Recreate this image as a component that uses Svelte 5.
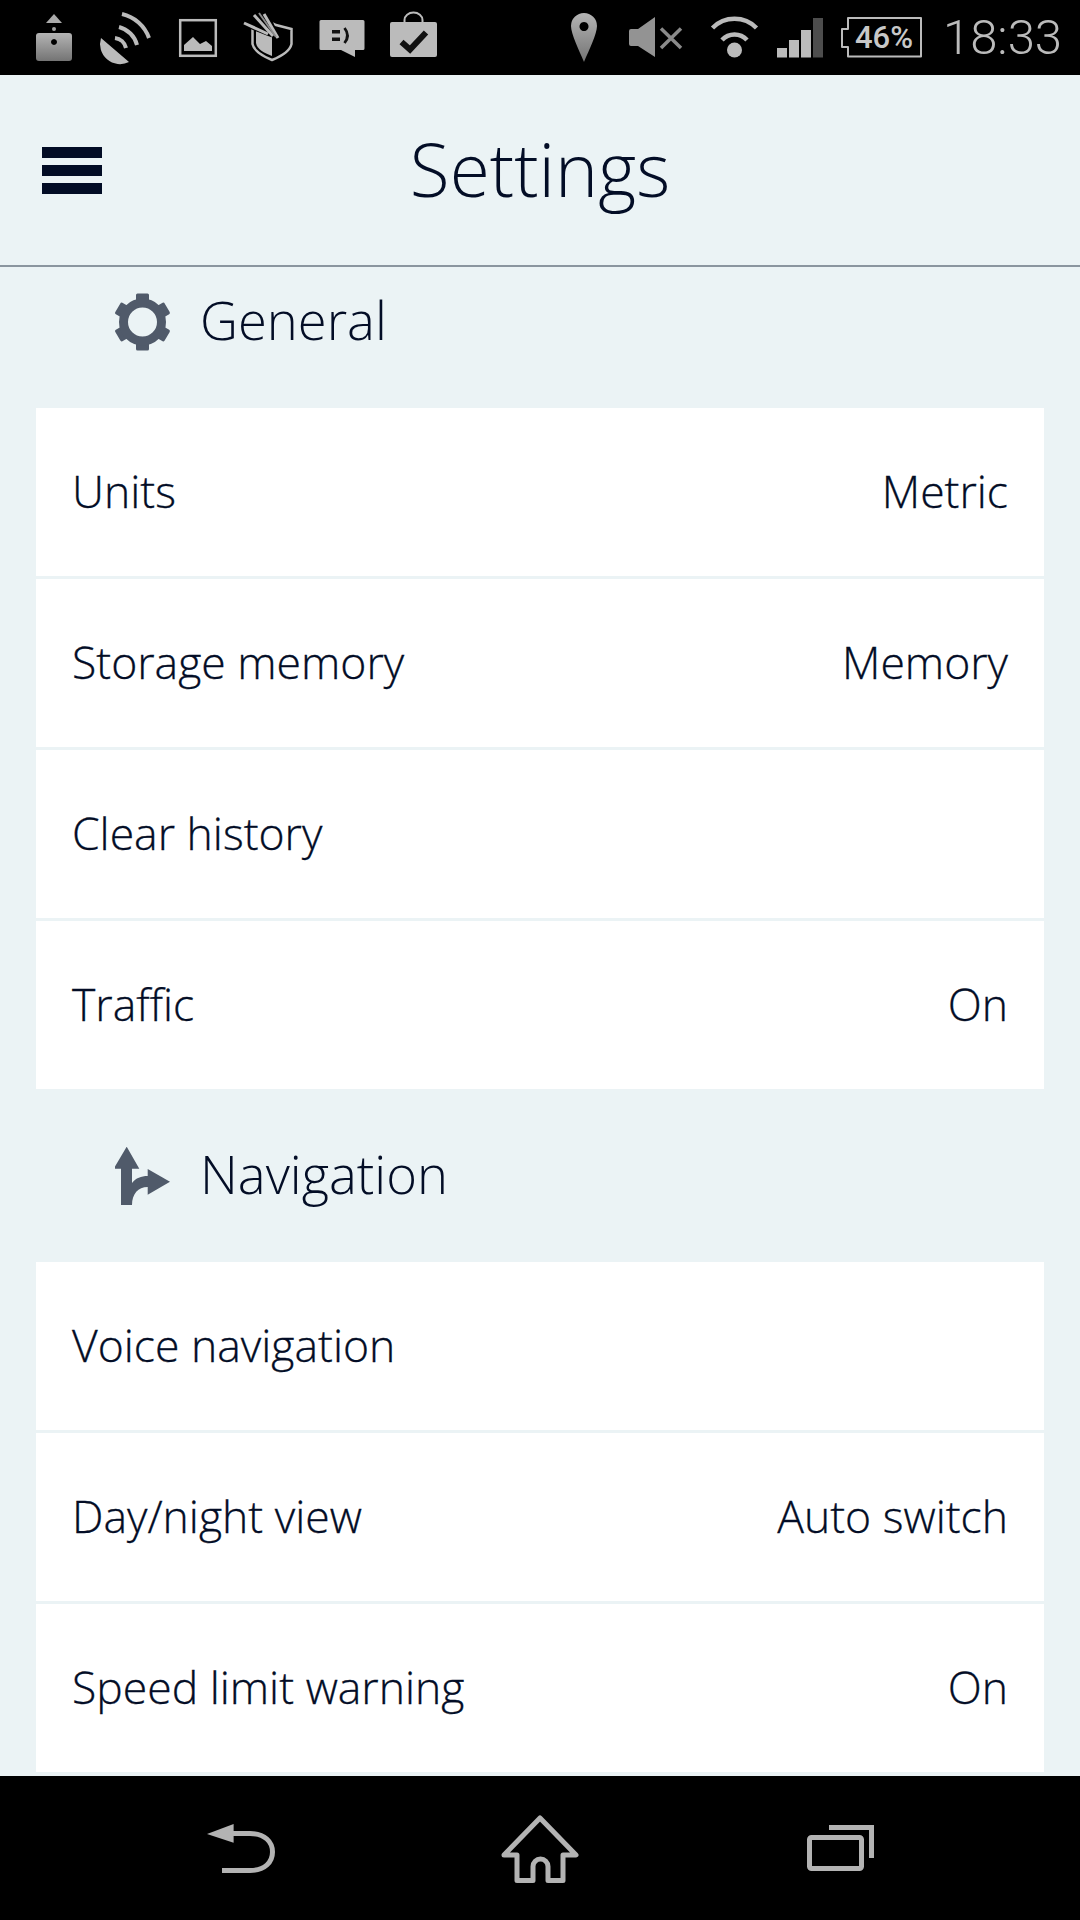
<script>
  const sections = [
    {
      title: "General",
      icon: "gear",
      rows: [
        { label: "Units", value: "Metric" },
        { label: "Storage memory", value: "Memory" },
        { label: "Clear history", value: "" },
        { label: "Traffic", value: "On" },
      ],
    },
    {
      title: "Navigation",
      icon: "fork",
      rows: [
        { label: "Voice navigation", value: "" },
        { label: "Day/night view", value: "Auto switch" },
        { label: "Speed limit warning", value: "On" },
      ],
    },
  ];

  const teeth = [0, 60, 120, 180, 240, 300];
</script>

<div class="screen">
  <!-- status bar icons are drawn in screen coordinates, hence the viewBoxes -->
  <div class="statusbar">
    <div class="group">
      <svg width="72" height="75" viewBox="18 0 72 75">
        <defs>
          <linearGradient id="dim" x1="0" y1="0" x2="0" y2="1">
            <stop offset="0" stop-color="#b4b4b4" />
            <stop offset="1" stop-color="#747474" />
          </linearGradient>
        </defs>
        <path d="M46 23 L54 14 L62 23Z" fill="#ababab" />
        <circle cx="54" cy="29" r="2" fill="#a0a0a0" />
        <path fill="url(#dim)" fill-rule="evenodd" d="M39 33H69a3 3 0 0 1 3 3V58a3 3 0 0 1-3 3H39a3 3 0 0 1-3-3V36a3 3 0 0 1 3-3ZM54 39a3 3 0 1 0 .01 0Z" />
      </svg>
      <svg width="72" height="75" viewBox="90 0 72 75">
        <path d="M101 38 L129 62 A20 20 0 0 1 101 38Z" fill="#bbb" />
        <g fill="none" stroke="#bbb" stroke-width="4">
          <path d="M122 14 A37.5 37.5 0 0 1 149 38" />
          <path d="M119 27 A25 25 0 0 1 137 45" />
          <path d="M115 38 A13 13 0 0 1 126 48" />
        </g>
      </svg>
      <svg width="72" height="75" viewBox="162 0 72 75">
        <rect x="180.2" y="20.2" width="35.6" height="35.6" fill="none" stroke="#bbb" stroke-width="2.5" />
        <path d="M184 51V45L193 37L200 44L206 41L212 46V51Z" fill="#bbb" />
      </svg>
      <svg width="72" height="75" viewBox="234 0 72 75">
        <path d="M252.500 28 L272 23 L276 25 L291.500 29 V44 C290 51 282 56 272 60 C262 56 254 51 252.500 44Z" fill="none" stroke="#bbb" stroke-width="2.500" />
        <path d="M256 30 H272 V56 C264 53 257 49 256 43Z" fill="#bbb" />
        <path d="M243 26 L268 36 L280 40 L270 14 L254 10Z" fill="#000" />
        <path d="M254 15 L273 36" stroke="#bbb" stroke-width="3" />
        <path d="M264 14 L278 38" stroke="#bbb" stroke-width="3" />
        <path d="M244 23 L268 34" stroke="#bbb" stroke-width="3" />
        <path d="M259 13 L276 37" stroke="#8c8c8c" stroke-width="2" />
      </svg>
      <svg width="72" height="75" viewBox="306 0 72 75">
        <path d="M321 20H363a1.5 1.5 0 0 1 1.500 1.500V48.500a1.500 1.500 0 0 1-1.500 1.500H355V57L341 50H321a1.500 1.500 0 0 1-1.500-1.500V21.500a1.500 1.500 0 0 1 1.500-1.500Z" fill="#bbb" />
        <rect x="332" y="30" width="8" height="3.500" fill="#111" />
        <rect x="332" y="37.500" width="8" height="3.500" fill="#111" />
        <path d="M344.500 28 Q350.500 35.500 344.500 43" fill="none" stroke="#111" stroke-width="2.800" />
      </svg>
      <svg width="72" height="75" viewBox="378 0 72 75">
        <path d="M404.500 24V20A9 7.500 0 0 1 422.500 20V24" fill="none" stroke="#bbb" stroke-width="2" />
        <rect x="390" y="22" width="47" height="35" rx="2" fill="#bbb" />
        <path d="M401.500 42 L410 49.500 L426 32.500" fill="none" stroke="#111" stroke-width="6" />
      </svg>
    </div>
    <div class="group">
      <svg width="52" height="75" viewBox="560 0 52 75">
        <path fill="url(#dim)" fill-rule="evenodd" d="M584 13A13 13 0 0 1 597 26C597 34 589 50 584 62C579 50 571 34 571 26A13 13 0 0 1 584 13ZM584 22a4.500 4.500 0 1 0 .01 0Z" />
      </svg>
      <svg width="85" height="75" viewBox="612 0 85 75">
        <path d="M631 29H638L655 17V57L638 46H631a2 2 0 0 1-2-2V31a2 2 0 0 1 2-2Z" fill="#939393" />
        <path d="M661 28.500 L681 48 M681 28.500 L661 48" stroke="#8a8a8a" stroke-width="3.500" />
      </svg>
      <svg width="71" height="75" viewBox="697 0 71 75">
        <circle cx="734.500" cy="50" r="7.500" fill="#bbb" />
        <g fill="none" stroke="#bbb" stroke-width="4.500">
          <path d="M712.500 28 A31 31 0 0 1 756.500 28" />
          <path d="M722 40 A17 17 0 0 1 747 40" />
        </g>
      </svg>
      <svg width="64" height="75" viewBox="768 0 64 75">
        <rect x="777" y="48" width="10" height="9.500" fill="#bbb" />
        <rect x="789" y="40" width="10" height="17.500" fill="#bbb" />
        <rect x="801" y="30" width="10" height="27.500" fill="#bbb" />
        <rect x="813" y="18" width="10" height="39.500" fill="#4d4d4d" />
      </svg>
      <svg width="103" height="75" viewBox="832 0 103 75">
        <path d="M848 18 H921 V56.500 H848 V47 H842 V29 H848Z" fill="none" stroke="#bbb" stroke-width="2" stroke-linejoin="round" />
        <text x="884" y="48" text-anchor="middle" class="batt">46%</text>
      </svg>
      <span class="clock">18:33</span>
    </div>
  </div>

  <header class="topbar">
    <div class="burger"><i></i><i></i><i></i></div>
    <h1>Settings</h1>
  </header>

  <main class="content">
    <div class="scrolled">
      {#each sections as section}
        <div class="section-head">
          {#if section.icon === "gear"}
            <svg width="56" height="58" viewBox="0 0 56 58">
              <g fill="#505a6a" transform="translate(27.500 29)">
                {#each teeth as deg}
                  <rect x="-6.500" y="-28.500" width="13" height="12" rx="1.500" transform="rotate({deg})" />
                {/each}
              </g>
              <circle cx="27.500" cy="29" r="19" fill="none" stroke="#505a6a" stroke-width="9" />
            </svg>
          {:else}
            <svg width="56" height="58" viewBox="115 1147 56 58">
              <path fill="#505a6a" d="M126.700 1146.700 L139.300 1168.700 H132 V1183 C136 1178 141 1176 147.700 1176 V1169 L170 1181.700 L147.700 1194.700 V1187 C138 1187 132 1194 132 1205.300 H121 V1168.700 H113.700Z" />
            </svg>
          {/if}
          <h2>{section.title}</h2>
        </div>
        <div class="card">
          {#each section.rows as row}
            <div class="row">
              <span>{row.label}</span>
              <span>{row.value}</span>
            </div>
          {/each}
        </div>
      {/each}
    </div>
  </main>

  <nav class="navbar">
    <svg width="100" height="144" viewBox="190 1776 100 144">
      <path d="M207 1834 L233.600 1824 V1842.700Z" fill="#b3b3b3" />
      <path d="M233 1833.500 H250 C265 1833.500 272.500 1842 272.500 1852 C272.500 1862 265 1870.500 250 1870.500 H222" fill="none" stroke="#b3b3b3" stroke-width="5" />
    </svg>
    <svg width="100" height="144" viewBox="490 1776 100 144">
      <path d="M540 1818 L576 1855 H563 V1880.500 H548 V1866.500 A7.500 7.500 0 0 0 533 1866.500 V1880.500 H517 V1855 H504Z" fill="none" stroke="#b3b3b3" stroke-width="5" stroke-linejoin="round" />
    </svg>
    <svg width="100" height="144" viewBox="790 1776 100 144">
      <rect x="809.500" y="1837.500" width="52" height="31" rx="2" fill="none" stroke="#b3b3b3" stroke-width="5" />
      <path d="M829 1827.500 H871.500 V1858" fill="none" stroke="#b3b3b3" stroke-width="5" />
    </svg>
  </nav>
</div>

<style>
  :global(body) {
    background: #ebf3f5;
  }

  .screen {
    width: 1080px;
    height: 1920px;
    display: flex;
    flex-direction: column;
    overflow: hidden;
    background: #ebf3f5;
    font-family: "Open Sans", "Liberation Sans", sans-serif;
    font-weight: 300;
    color: #030d26;
  }

  .statusbar {
    height: 75px;
    flex: none;
    background: #000;
    display: flex;
    justify-content: space-between;
    padding: 0 18px 0 18px;
  }

  .group {
    display: flex;
    align-items: center;
  }

  .group svg {
    display: block;
  }

  .batt {
    font-family: Roboto, sans-serif;
    font-size: 31px;
    font-weight: 500;
    fill: #c8c8c8;
  }

  .clock {
    margin-left: 8px;
    font-family: Roboto, sans-serif;
    font-weight: 300;
    font-size: 49px;
    color: #bbb;
  }

  .topbar {
    height: 190px;
    flex: none;
    display: grid;
    grid-template-columns: 1fr auto 1fr;
    align-items: center;
    padding-left: 42px;
    padding-right: 42px;
    border-bottom: 2px solid #8a959f;
  }

  .burger {
    width: 60px;
    display: flex;
    flex-direction: column;
    gap: 7px;
  }

  .burger i {
    display: block;
    height: 11px;
    background: #020c25;
  }

  h1 {
    margin: 0;
    padding-bottom: 4px;
    font-size: 73px;
    font-weight: 300;
  }

  .content {
    flex: 1;
    min-height: 0;
    overflow: hidden;
  }

  /* list sits scrolled a little under the header */
  .scrolled {
    margin-top: -32px;
  }

  .section-head {
    height: 173px;
    display: flex;
    align-items: center;
    gap: 29px;
    padding-left: 115px;
  }

  h2 {
    margin: 0;
    padding-bottom: 4px;
    font-size: 52.5px;
    font-weight: 300;
  }

  .card {
    margin: 0 36px;
    display: flex;
    flex-direction: column;
    gap: 3px;
  }

  .row {
    height: 168px;
    box-sizing: border-box;
    background: #fff;
    padding: 0 36px 3px;
    display: flex;
    align-items: center;
    justify-content: space-between;
    font-size: 44.5px;
    -webkit-text-stroke: 0.3px #030d26;
  }

  .navbar {
    height: 144px;
    flex: none;
    background: #000;
    display: flex;
    justify-content: center;
    gap: 200px;
  }
</style>
